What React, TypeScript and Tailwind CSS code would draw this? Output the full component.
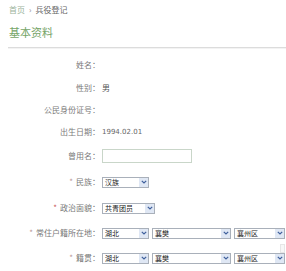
import React from 'react';

const font = { fontFamily: '"Noto Sans CJK SC", "DejaVu Sans", sans-serif' };

function Select({ value, width }: { value: string; width: string }) {
  return (
    <div
      className={`flex h-[11px] items-center justify-between border border-[#a9b0ba] bg-white ${width}`}
    >
      <span className="pl-[2px] text-[7px] leading-none text-[#222]">{value}</span>
      <span className="flex h-full w-[9px] items-center justify-center bg-[#dfe7f4]">
        <svg width="6" height="4" viewBox="0 0 6 4">
          <path d="M0.8 0.8 L3 3 L5.2 0.8" fill="none" stroke="#3e5f9c" strokeWidth="1.2" />
        </svg>
      </span>
    </div>
  );
}

function Row({
  h,
  label,
  star,
  starColor,
  children,
}: {
  h: string;
  label: string;
  star?: boolean;
  starColor?: string;
  children?: React.ReactNode;
}) {
  return (
    <div className={`flex items-center ${h}`}>
      <div className="w-[102px] shrink-0 pr-[2px] text-right text-[8px] leading-none text-[#7a7a7a]">
        {star && <span className={`mr-[3px] ${starColor ?? 'text-[#b89898]'}`}>*</span>}
        {label}：
      </div>
      <div className="flex items-center gap-[3px] text-[8px] leading-none text-[#555]">{children}</div>
    </div>
  );
}

export default function App() {
  return (
    <div className="relative h-[271px] w-[286px] overflow-hidden bg-white" style={font}>
      <div className="flex h-[20px] items-center pl-[9px] text-[8px] leading-none">
        <span className="text-[#9ab39a]">首页</span>
        <span className="mx-[4px] text-[#888]">›</span>
        <span className="text-[#666]">兵役登记</span>
      </div>
      <div className="flex h-[24px] items-center pl-[9px] text-[11px] leading-none text-[#76a568]">
        基本资料
      </div>
      <div className="ml-[8px] mt-[3px] h-[2px] border-t border-[#dcdcdc] bg-[#f3f3f3]" />

      <div className="pt-[5px]">
        <Row h="h-[22px]" label="姓名" />
        <Row h="h-[24px]" label="性别">男</Row>
        <Row h="h-[20px]" label="公民身份证号" />
        <Row h="h-[24px]" label="出生日期">
          <span className="text-[7px] text-[#666]" style={{ fontFamily: '"DejaVu Sans", sans-serif' }}>
            1994.02.01
          </span>
        </Row>
        <Row h="h-[24px]" label="曾用名">
          <div className="h-[14px] w-[90px] border border-[#c9d6c9] bg-white" />
        </Row>
        <Row h="h-[28px]" label="民族" star>
          <Select value="汉族" width="w-[47px]" />
        </Row>
        <Row h="h-[24px]" label="政治面貌" star starColor="text-[#c8585a]">
          <Select value="共青团员" width="w-[53px]" />
        </Row>
        <Row h="h-[26px]" label="常住户籍所在地" star>
          <Select value="湖北" width="w-[47px]" />
          <Select value="襄樊" width="w-[79px]" />
          <Select value="襄州区" width="w-[51px]" />
        </Row>
        <Row h="h-[24px]" label="籍贯" star>
          <Select value="湖北" width="w-[47px]" />
          <Select value="襄樊" width="w-[79px]" />
          <Select value="襄州区" width="w-[51px]" />
        </Row>
      </div>

      <div className="absolute left-[280px] top-[244px] h-[9px] w-[5px] border border-[#e6e6e6] bg-[#f7f7f7]" />
    </div>
  );
}
